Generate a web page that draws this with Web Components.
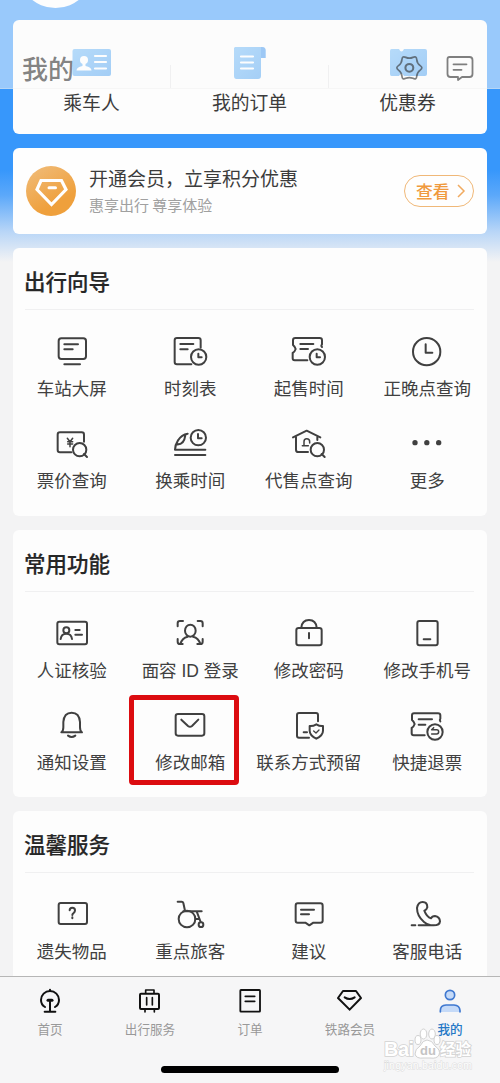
<!DOCTYPE html>
<html lang="zh-CN">
<head>
<meta charset="utf-8">
<title>我的</title>
<style>
html,body{margin:0;padding:0}
body{width:500px;height:1083px;overflow:hidden;font-family:"Noto Sans CJK SC","Liberation Sans",sans-serif;color:#444}
</style>
</head>
<body>
<mine-page></mine-page>
<script>
const ICONS = {
  board:['157 24 120 108','<rect x="177" y="40" width="82" height="62" rx="8"/><path d="M194 58h41M194 73h25M194 118h47"/>'],
  timetable:['512 24 120 108','<path d="M604 68V46q0-7-7-7h-64q-7 0-7 7v65q0 7 7 7h43M543 57h39M543 73h22"/><circle cx="598" cy="96" r="23"/><path d="M597 86v11h10"/>'],
  saletime:['118 24 120 108','<path d="M217 66q-4-4 0-8V46q0-7-7-7h-73q-7 0-7 7v14q5 4 8 12q-3 9-9 12v16q0 6 6 6h38M152 57h39M152 72h23"/><circle cx="203" cy="96" r="23"/><path d="M201 86v11h10"/>'],
  clock:['473 24 120 108','<circle cx="532" cy="80" r="41"/><path d="M529 58v25h20"/>'],
  fare:['157 300 120 108','<path d="M253 350v-21q0-7-7-7h-65q-7 0-7 7v46q0 7 7 7h34"/><circle cx="240" cy="374" r="20"/><path d="m253 387 9 9"/><path stroke-width="4.500" d="m203 340 8 10 8-10M211 350v15M204 350h15M204 357h15"/>'],
  transfer:['512 300 120 108','<path d="M565 326q-18 3-29 20-9 14-9 28h91M527 390h91M532 358q22 2 26-27"/><circle cx="597" cy="338" r="23"/><path d="M596 327v13h11"/>'],
  agency:['118 300 120 108','<path d="m130 337 41-20 41 20M139 336v38q0 7 7 7h29M203 336v9"/><circle cx="203" cy="374" r="20"/><path d="m216 387 9 9"/><path stroke-width="4.5" d="M163 361v-11q0-9 8-9 9 0 9 9v4M158 362h18"/>'],
  more:['473 300 120 108','<g fill="currentColor" stroke="none"><circle cx="497" cy="353" r="8"/><circle cx="532.500" cy="353" r="8"/><circle cx="568" cy="353" r="8"/></g>'],
  idcard:['157 45 120 108','<rect x="173" y="65" width="89" height="68" rx="6"/><circle cx="200" cy="91" r="9"/><path d="M183 117q2-16 17-16t17 16M227 90h13M227 104h20"/>'],
  face:['512 45 120 108','<ellipse cx="573" cy="92" rx="16" ry="18"/><path d="M551 63h-9q-7 0-7 7v9M595 63h8q7 0 7 7v9M535 117v8q0 7 7 7h8M610 117v8q0 7-7 7h-9M543 132q5-18 22-22M603 132q-5-18-22-22"/>'],
  lock:['118 45 120 108','<rect x="140" y="84" width="76" height="52" rx="7"/><path d="M155 83q2-23 23-23t23 23M178 99v16"/>'],
  phone:['473 45 120 108','<rect x="504" y="63" width="61" height="73" rx="6"/><path d="M523 118h20"/>'],
  bell:['157 321 120 108','<path d="M185 397q6-3 6-15v-16q2-28 25-28t25 28v16q0 12 6 15zM205 407q11 8 22 0"/>'],
  mail:['512 321 120 108','<rect x="529" y="342" width="86" height="65" rx="7"/><path d="m546 359 20 19q6 5 12 0l19-19"/>'],
  contact:['118 321 120 108','<path d="M205 364v-19q0-6-6-6h-51q-6 0-6 6v62q0 6 6 6h30M162 397h10"/><path d="M200 373q10 6 20 5v14q0 14-20 24-20-10-20-24v-14q10 1 20-5z"/><path stroke-width="4" d="m192 393 7 6 9-9"/>'],
  refund:['473 321 120 108','<path d="M573 364q-3-4 0-8v-10q0-6-7-6h-72q-6 0-6 6v14q5 4 8 12-3 9-9 12v16q0 6 6 6h33M508 358h40M508 374h20"/><circle cx="557" cy="396" r="23"/><path stroke-width="4.500" d="m553 383-6 6h15q6 0 6 6.500t-6 6.500h-15"/>'],
  lost:['157 48 120 108','<rect x="177" y="69" width="85" height="63" rx="6"/><path d="M210 91q0-8 8-8t8 8q0 5-4 8t-4 6M218 112v3"/>'],
  wheel:['512 48 120 108','<circle cx="563" cy="117" r="25"/><circle cx="605" cy="134" r="7"/><path d="M535 65h12q4 0 5 4l5 23M552 94h55M592 94l12 32M588 117h10"/>'],
  advice:['118 48 120 108','<path d="M144 70h68q7 0 7 7v45q0 6-7 6h-21l-12 8-12-8h-23q-6 0-6-6V77q0-7 6-7zM154 89h39M154 103h24"/>'],
  call:['473 48 120 108','<path d="M487 136h11M508 136h45q18 0 19-12-1-14-15-16-9 0-12 7-13-4-20-23 7-2 9-10 0-16-14-16t-17 18q0 24 21 42 9 8 20 10"/>'],
  home:['90 315 120 96','<g stroke="#111" stroke-width="6"><path d="M135 381q-12-7-12-21a27 27 0 0 1 54 0q0 14-12 21M150 333v-4M134 395h32M150 365v28"/><path stroke-width="9" d="M144 361h12"/></g>'],
  travel:['390 315 120 96','<g stroke="#111"><rect x="420" y="341" width="57" height="46" rx="3" stroke-width="6"/><path stroke-width="5" d="M437 339v-9h25v9M440 353v22M457 353v22M435 389v7M463 389v7"/></g>'],
  order:['690 315 120 96','<g stroke="#111" stroke-width="5.500"><rect x="721" y="330" width="59" height="65" rx="2"/><path d="M736 349h28M736 364h28"/></g>'],
  vip:['240 315 120 96','<path stroke="#111" stroke-width="6" d="m279 333h39l15 21-34 35-35-35zM284 352q15 10 30 0"/>'],
  me:['540 315 120 96','<g stroke="#3f78d0" fill="#c5daf8" stroke-width="5"><circle cx="600" cy="345" r="14"/><path d="M571 396v-4q0-16 17-17h24q17 1 18 17v4"/></g>'],
  diamond:['0 0 50 50','<path stroke="#fff" stroke-width="3.200" stroke-linejoin="miter" d="M15 14.500h20.500l4.500 9L25.500 38.500 11 23.500z"/><path stroke="#fff" stroke-width="3" d="M23 21.800h6.500"/>'],
  passenger:['0 0 40 36','<rect x=".5" y="2" width="38.500" height="27" rx="2" fill="url(#b)" stroke="none"/><g fill="#fff" stroke="none"><circle cx="12" cy="13" r="4"/><path d="M10.500 15h3v4q6 1 6 4.500h-15q0-3.500 6-4.500z"/></g><path stroke="#fff" d="M23 9h11M23 15h11M23 21.500h11"/>'],
  orders:['0 0 40 36','<path fill="url(#b)" stroke="none" d="M5 0h27q3.500 0 3.500 3v8H31v18q0 3-3 3H6.500Q4 32 4 29V1z"/><path stroke="none" fill="#3f94ef" d="M31 0q4.500 0 4.500 3v8H31z"/><path stroke="#fff" d="M11 9.500h12M11 15.500h12M11 21.500h12"/>'],
  coupon:['0 0 40 36','<path fill="url(#b)" stroke="none" d="M3.500 2H11q2.500 5 5 0h21q2 0 2 2v23q0 2-2 2H16q-2.500-5-5 0H3.500q-1.500 0-1.500-2V4q0-2 1.500-2z"/>'],
  gear:['-.6 -.6 32 29.900','<path stroke-width="1.800" d="M26.300 11.800Q29.800 14.200 26.300 16.600 22.900 18.950 22.600 23.100 22.300 27.200 18.500 25.400 14.700 23.700 10.900 25.400 7.100 27.200 6.800 23.100 6.500 18.950 3.100 16.600-.4 14.200 3.100 11.800 6.500 9.450 6.800 5.300 7.100 1.200 10.900 3 14.700 4.700 18.500 3 22.300 1.200 22.600 5.300 22.900 9.450 26.300 11.800z"/><circle cx="14.700" cy="14.200" r="4.200" stroke-width="2.200"/>'],
  message:['0 0 30 28','<path d="M4.500 3h20q3 0 3 3v14q0 3-3 3H17l-4 3v-3H5.500q-3 0-3-3V5q0-2 2-2zM8.500 10.300h13M8.500 15.800h8" stroke-width="1.800"/>']
};

function define(name, html, setup) {
  const t = document.createElement('template');
  t.innerHTML = html;
  customElements.define(name, class extends HTMLElement {
    constructor() {
      super();
      this.attachShadow({mode:'open'}).append(t.content.cloneNode(true));
    }
    connectedCallback() { if (setup) setup(this, this.shadowRoot); }
  });
}

define('ui-icon', `<style>
:host{display:block;width:40px;height:36px;flex:none}
div,svg{display:block;width:100%;height:100%}
svg{fill:none;stroke:currentColor;stroke-linecap:round;stroke-linejoin:round}
</style><div></div>`, (el, root) => {
  const [box, body] = ICONS[el.getAttribute('name')];
  const sw = parseFloat(box.split(' ')[2]) > 100 ? 6 : 2.2;
  root.querySelector('div').innerHTML = `<svg viewBox="${box}" stroke-width="${sw}"><defs><linearGradient id="b" x1="0" y1="0" x2="1" y2="1"><stop offset="0" stop-color="#70baf8"/><stop offset="1" stop-color="#4ba0f0"/></linearGradient></defs>${body}</svg>`;
});

define('ui-card', `<style>
:host{display:block;background:#fdfdfd;border-radius:6px;box-sizing:border-box}
</style><slot></slot>`);

define('quick-link', `<style>
:host{display:flex;flex-direction:column;align-items:center;padding-top:27px;font-size:18.800px;line-height:24px;color:#3c3c3c;position:relative;left:-.5px}
.t{margin-top:7px;white-space:nowrap}
:host(:not(:last-child))::after{content:"";position:absolute;right:0;top:45px;height:23px;border-right:1px solid #e4e4e6}
</style><div class="i"></div><div class="t"><slot></slot></div>`, (el, root) => {
  root.querySelector('.i').innerHTML = `<ui-icon name="${el.getAttribute('icon')}"></ui-icon>`;
});

define('service-item', `<style>
:host{display:flex;flex-direction:column;align-items:center;font-family:"Liberation Sans","Noto Sans CJK SC",sans-serif;font-size:17.500px;line-height:20px;color:#404040;height:66px;position:relative}
.t{margin-top:10px;white-space:nowrap}
.mark{display:none;position:absolute;left:-2px;top:-12px;width:100px;height:80px;border:5px solid #dc0c10;border-radius:4px}
:host([marked]) .mark{display:block}
</style><div class="i"></div><div class="t"><slot></slot></div><div class="mark"></div>`, (el, root) => {
  root.querySelector('.i').innerHTML = `<ui-icon name="${el.getAttribute('icon')}"></ui-icon>`;
});

define('service-section', `<style>
:host{display:block;background:#fdfdfd;border-radius:6px;height:267.500px}
h2{margin:0;padding:17px 0 0 11px;height:44px;font-size:21.500px;line-height:32px;font-weight:500;color:#262626;-webkit-text-stroke:.2px #262626}
.rule{height:1px;margin:0 13px 0 12px;background:#f0f0f1}
.grid{display:grid;grid-template-columns:repeat(4,118.500px);row-gap:26px;padding-top:23px;margin-left:-.5px}
</style><h2></h2><div class="rule"></div><div class="grid"><slot></slot></div>`, (el, root) => {
  root.querySelector('h2').textContent = el.getAttribute('heading');
});

define('member-banner', `<style>
:host{display:flex;align-items:center;height:86px;padding:0 13px;box-sizing:border-box;background:#fefefe;border-radius:6px}
.badge{width:50px;height:50px;border-radius:50%;background:linear-gradient(150deg,#f0bd7c,#efa03c 70%);flex:none}
.badge ui-icon{width:50px;height:50px}
.copy{margin:-2px 0 0 13px;flex:1;white-space:nowrap}
.a{font-size:19px;line-height:26px;color:#3c3c3c}
.b{font-size:15px;line-height:20px;color:#a0a0a0;margin-top:4px}
.go{display:flex;align-items:center;width:70px;height:32px;box-sizing:border-box;border:1.300px solid #f0b878;border-radius:16px;padding-left:11px;font-size:16.800px;font-weight:500;color:#f09a3e;margin-top:-1px}
svg{margin-left:7px}
</style><div class="badge"><ui-icon name="diamond"></ui-icon></div>
<div class="copy"><div class="a">开通会员，立享积分优惠</div><div class="b">惠享出行 尊享体验</div></div>
<div class="go">查看<svg width="9" height="14" viewBox="0 0 9 14" fill="none" stroke="#f0aa60" stroke-width="1.500"><path d="m1 1 6 6-6 6"/></svg></div>`);

define('nav-header', `<style>
:host{display:flex;position:absolute;left:0;top:0;width:500px;height:89px;box-sizing:border-box;background:rgba(252,252,252,.5);border-bottom:1px solid rgba(235,235,235,.35);padding:50px 25px 0 22px;color:rgba(50,50,50,.62)}
.t{font-size:26px;line-height:38px;font-weight:500;flex:1;margin-top:-1px}
ui-icon{width:30px;height:28px;margin-top:4px}
ui-icon+ui-icon{margin-left:20px}
</style><div class="t">我的</div><ui-icon name="gear"></ui-icon><ui-icon name="message"></ui-icon>`);

define('tab-item', `<style>
:host{display:flex;flex-direction:column;align-items:center;width:100px;padding-top:8px;font-size:12.600px;line-height:18px;color:#999}
:host([active]){color:#2478c6;font-weight:500}
.t{margin-top:3px}
.i ui-icon{height:32px}
</style><div class="i"></div><div class="t"><slot></slot></div>`, (el, root) => {
  root.querySelector('.i').innerHTML = `<ui-icon name="${el.getAttribute('icon')}"></ui-icon>`;
});

define('tab-bar', `<style>
:host{display:block;position:absolute;left:0;bottom:0;width:500px;height:107px;box-sizing:border-box;background:#f6f6f7;border-top:1px solid #b6b6b6}
.tabs{display:flex;height:89px}
.bar{width:178px;height:7px;border-radius:4px;background:#000;margin:0 auto}
</style><div class="tabs"><slot></slot></div><div class="bar"></div>`);

define('page-watermark', `<style>
:host{display:block;position:absolute;left:383px;top:1027px;width:92px;height:46px;font-family:"Liberation Sans","Noto Sans CJK SC",sans-serif}
svg{display:block;overflow:visible}
text{fill:#fff;stroke:#d2d2d2;stroke-width:1.600px;paint-order:stroke}
</style><svg width="92" height="46" viewBox="0 0 92 46">
<text x="1" y="29" font-size="20" font-weight="700" textLength="30">Bai</text>
<g fill="#fff" stroke="#d0d0d0" stroke-width="1"><ellipse cx="35" cy="13" rx="3" ry="4.500"/><ellipse cx="40.500" cy="7" rx="3.300" ry="5"/><ellipse cx="49" cy="7" rx="3.300" ry="5"/><ellipse cx="54" cy="13" rx="3" ry="4.500"/><path d="M44 13q5 0 8 6 6 4 4 9-2 4-9 3h-6q-8 1-9-4 0-5 5-8 3-6 7-6z"/></g>
<text x="37" y="28" font-size="13" style="fill:#c4c4c4;stroke:none" font-weight="700">du</text>
<text x="57" y="28" font-size="15.500" font-weight="700">经验</text>
<text x="1" y="42" font-size="10.500" textLength="88" style="stroke-width:1px;stroke:#dcdcdc">jingyan.baidu.com</text>
</svg>`);

define('mine-page', `<style>
:host{display:block;position:relative;width:500px;height:1083px;overflow:hidden;background:linear-gradient(#3797fb 0,#3797fb 170px,#5ba8fa 195px,#b9d6f7 232px,#f3f3f4 262px)}
main{display:flex;flex-direction:column;gap:14px;padding:20px 13px 0}
.avatar{position:absolute;left:18px;top:-67px;width:75px;height:75px;border-radius:50%;background:#fff}
.quick{height:114px;display:grid;grid-template-columns:repeat(3,158px)}
</style>
<div class="avatar"></div>
<main>
<ui-card><div class="quick"><quick-link icon="passenger">乘车人</quick-link><quick-link icon="orders">我的订单</quick-link><quick-link icon="coupon">优惠券</quick-link></div></ui-card>
<member-banner></member-banner>
<service-section heading="出行向导">
<service-item icon="board">车站大屏</service-item><service-item icon="timetable">时刻表</service-item><service-item icon="saletime">起售时间</service-item><service-item icon="clock">正晚点查询</service-item>
<service-item icon="fare">票价查询</service-item><service-item icon="transfer">换乘时间</service-item><service-item icon="agency">代售点查询</service-item><service-item icon="more">更多</service-item>
</service-section>
<service-section heading="常用功能">
<service-item icon="idcard">人证核验</service-item><service-item icon="face">面容 ID 登录</service-item><service-item icon="lock">修改密码</service-item><service-item icon="phone">修改手机号</service-item>
<service-item icon="bell">通知设置</service-item><service-item icon="mail" marked>修改邮箱</service-item><service-item icon="contact">联系方式预留</service-item><service-item icon="refund">快捷退票</service-item>
</service-section>
<service-section heading="温馨服务">
<service-item icon="lost">遗失物品</service-item><service-item icon="wheel">重点旅客</service-item><service-item icon="advice">建议</service-item><service-item icon="call">客服电话</service-item>
</service-section>
</main>
<nav-header></nav-header>
<tab-bar><tab-item icon="home">首页</tab-item><tab-item icon="travel">出行服务</tab-item><tab-item icon="order">订单</tab-item><tab-item icon="vip">铁路会员</tab-item><tab-item icon="me" active>我的</tab-item></tab-bar>
<page-watermark></page-watermark>`);
</script>
</body>
</html>
